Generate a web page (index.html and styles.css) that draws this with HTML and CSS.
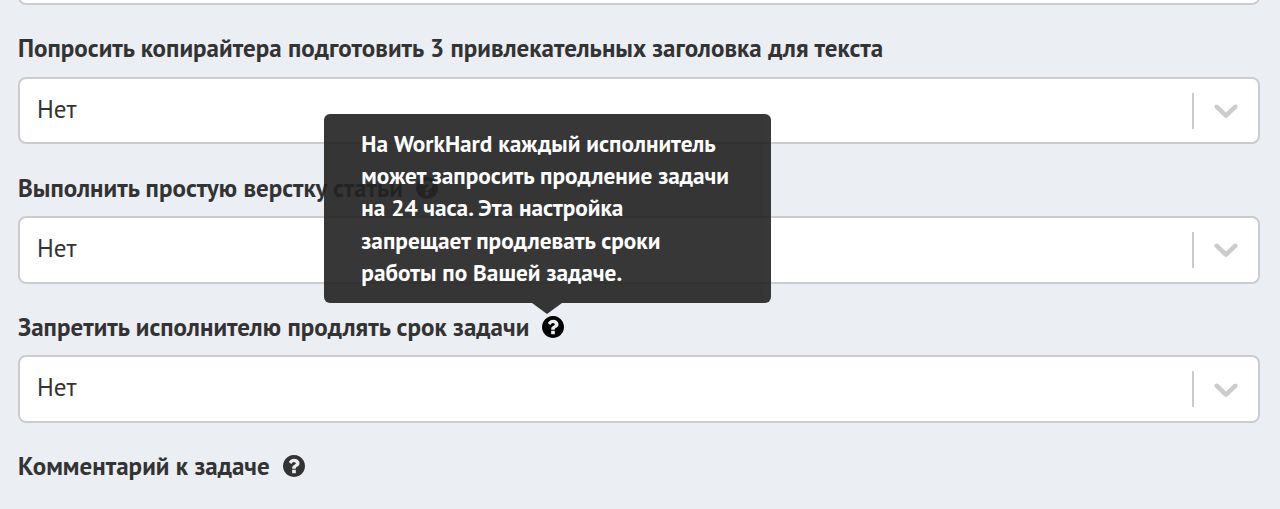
FILE: index.html
```html
<!DOCTYPE html>
<html lang="ru">
<head>
  <meta charset="UTF-8">
  <meta name="viewport" content="width=device-width, initial-scale=1">
  <title>Настройки задачи</title>
  <link rel="stylesheet" href="styles.css">
</head>
<body>
  <svg class="sprite">
    <symbol id="chevron" viewBox="0 0 20 20">
      <path d="M4.516 7.548c0.436-0.446 1.043-0.481 1.576 0l3.908 3.747 3.908-3.747c0.533-0.481 1.141-0.446 1.574 0 0.436 0.445 0.408 1.197 0 1.615-0.406 0.418-4.695 4.502-4.695 4.502-0.217 0.223-0.502 0.335-0.787 0.335s-0.57-0.112-0.789-0.335c0 0-4.287-4.084-4.695-4.502s-0.436-1.17 0-1.615z"/>
    </symbol>
    <symbol id="question" viewBox="128 128 1536 1536">
      <path d="M1024 1376v-192q0-14-9-23t-23-9h-192q-14 0-23 9t-9 23v192q0 14 9 23t23 9h192q14 0 23-9t9-23zm256-672q0-88-55.5-163t-138.5-116-170-41q-243 0-371 213-15 24 8 42l132 100q7 6 19 6 16 0 25-12 53-68 86-92 34-24 86-24 48 0 85.5 26t37.500 59q0 38-20 61t-68 45q-63 28-115.500 86.500t-52.500 125.500v36q0 14 9 23t23 9h192q14 0 23-9t9-23q0-19 21.500-49.500t54.500-49.500q32-18 49-28.500t46-35 44.500-48 28-60.500 12.500-81zm384 192q0 209-103 385.500t-279.500 279.500-385.500 103-385.500-103-279.500-279.500-103-385.500 103-385.500 279.500-279.500 385.500-103 385.500 103 279.500 279.500 103 385.500z"/>
    </symbol>
  </svg>

  <form class="form">
    <div class="select">
      <span class="value"></span>
      <span class="arrow"><svg><use href="#chevron"/></svg></span>
    </div>

    <div class="label"><span class="text">Попросить копирайтера подготовить 3 привлекательных заголовка для текста</span></div>
    <div class="select">
      <span class="value">Нет</span>
      <span class="arrow"><svg><use href="#chevron"/></svg></span>
    </div>

    <div class="label">
      <span class="text">Выполнить простую верстку статьи</span>
      <span class="help"><svg><use href="#question"/></svg></span>
    </div>
    <div class="select">
      <span class="value">Нет</span>
      <span class="arrow"><svg><use href="#chevron"/></svg></span>
    </div>

    <div class="label">
      <span class="text">Запретить исполнителю продлять срок задачи</span>
      <span class="help active">
        <svg><use href="#question"/></svg>
        <span class="tooltip">На WorkHard каждый исполнитель<br>может запросить продление задачи<br>на 24 часа. Эта настройка<br>запрещает продлевать сроки<br>работы по Вашей задаче.</span>
      </span>
    </div>
    <div class="select">
      <span class="value">Нет</span>
      <span class="arrow"><svg><use href="#chevron"/></svg></span>
    </div>

    <div class="label">
      <span class="text">Комментарий к задаче</span>
      <span class="help"><svg><use href="#question"/></svg></span>
    </div>
  </form>
</body>
</html>
```
FILE: styles.css
```css
* {
  box-sizing: border-box;
}

body {
  margin: 0;
  height: 509px;
  overflow: hidden;
  background-color: #ebeef3;
  color: #333;
  font-family: "PT Sans", "Noto Sans", sans-serif;
  font-size: 25px;
}

.sprite {
  display: none;
}

.form {
  margin: -62.4px 20px 0 18px;
}

.select {
  display: flex;
  align-items: center;
  height: 67.5px;
  background: #fff;
  border: 2px solid #ccc;
  border-radius: 8px;
}

.value {
  flex: 1;
  padding-left: 17px;
  padding-bottom: 3.5px;
}

.arrow {
  display: flex;
  align-items: center;
  height: 36px;
  padding: 0 12px;
  border-left: 2px solid #ccc;
}

.arrow svg {
  width: 40px;
  height: 40px;
  margin-top: -1px;
  fill: #ccc;
}

.label {
  display: flex;
  align-items: center;
  height: 71.75px;
  padding-top: 15px;
  font-weight: bold;
  white-space: nowrap;
}

.text {
  line-height: 32px;
  letter-spacing: 0.03px;
}

.help {
  position: relative;
  width: 22px;
  height: 22px;
  margin-left: 13px;
  fill: #333;
}

.help svg {
  display: block;
  width: 22px;
  height: 22px;
}

.active {
  fill: #000;
}

.tooltip {
  position: absolute;
  bottom: 35px;
  left: -218px;
  width: 447px;
  height: 189px;
  padding: 13px 37px;
  background: #222;
  border-radius: 6px;
  color: #fff;
  font-size: 23.3px;
  line-height: 32.2px;
  opacity: 0.9;
}

.tooltip::after {
  content: "";
  position: absolute;
  top: 100%;
  left: 208px;
  border: 15px solid transparent;
  border-top: 11px solid #222;
  border-bottom: none;
}
```
